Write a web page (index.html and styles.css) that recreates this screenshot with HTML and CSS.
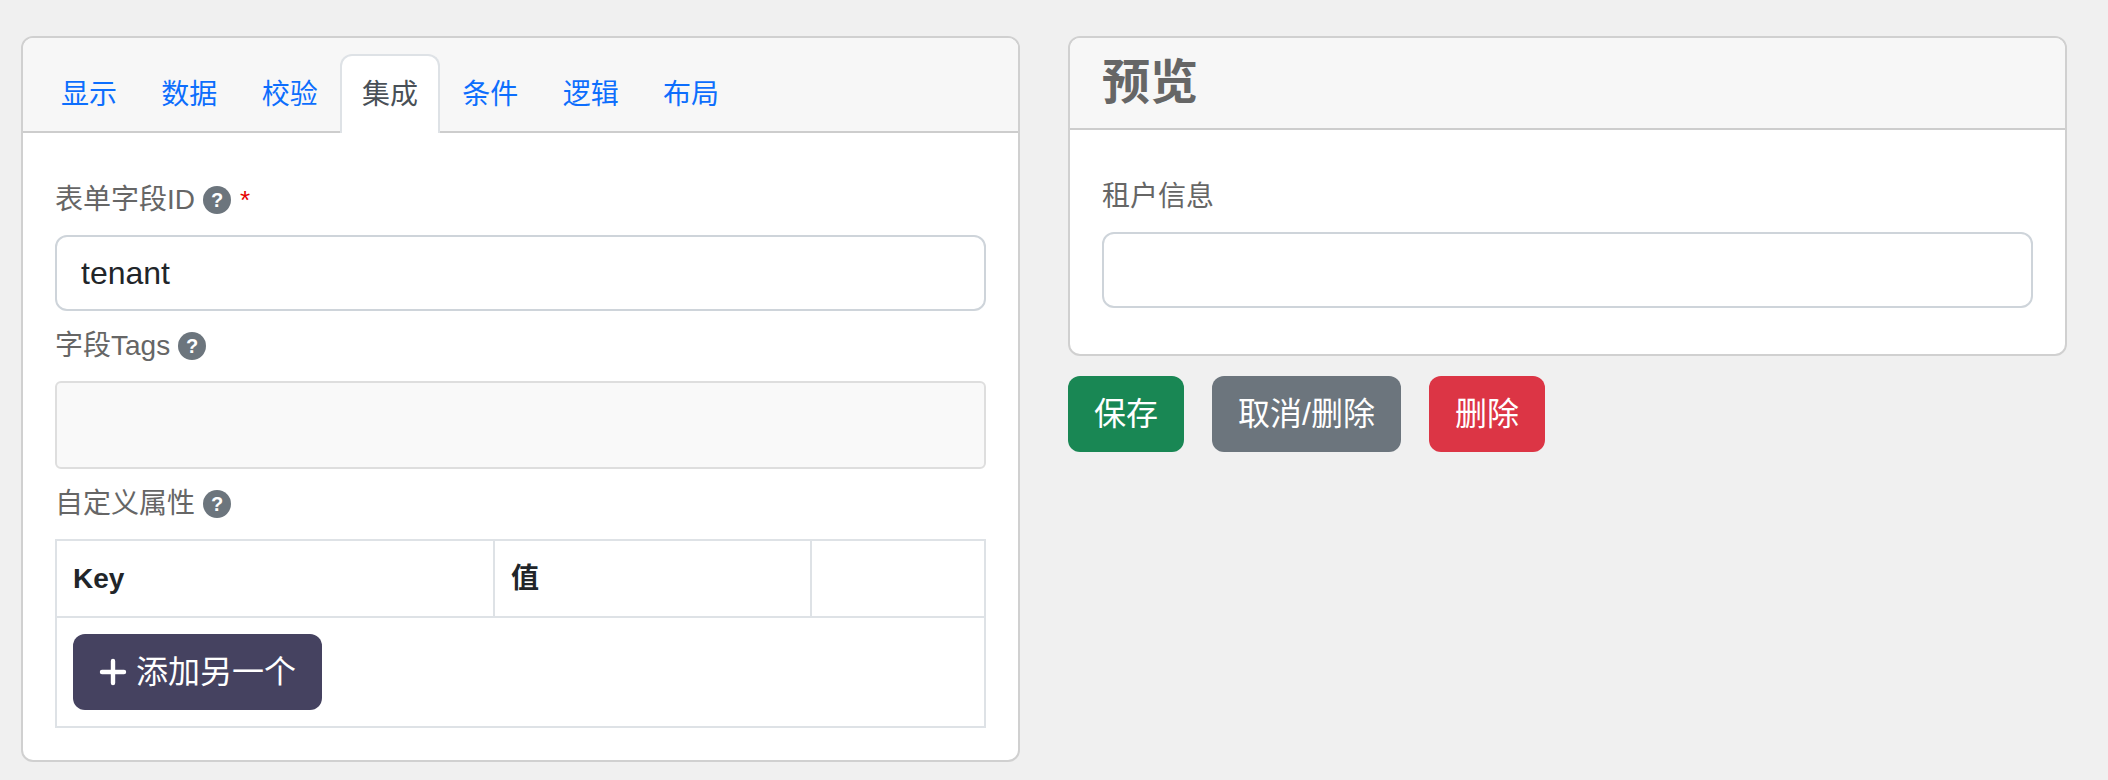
FILE: index.html
```html
<!DOCTYPE html>
<html lang="zh">
<head>
<meta charset="utf-8">
<title>表单字段</title>
<link rel="stylesheet" href="styles.css">
</head>
<body>
<main class="page">
  <section class="card card-edit">
    <nav class="card-header tabs-header">
      <a class="tab">显示</a>
      <a class="tab">数据</a>
      <a class="tab">校验</a>
      <a class="tab active">集成</a>
      <a class="tab">条件</a>
      <a class="tab">逻辑</a>
      <a class="tab">布局</a>
    </nav>
    <div class="card-body">
      <div class="field">
        <label class="label"><span>表单字段ID</span><span class="help">?</span><span class="req">*</span></label>
        <input class="control" type="text" value="tenant">
      </div>
      <div class="field">
        <label class="label"><span>字段Tags</span><span class="help">?</span></label>
        <div class="tags"></div>
      </div>
      <div class="field">
        <label class="label"><span>自定义属性</span><span class="help">?</span></label>
        <table class="grid">
          <thead>
            <tr><th class="col-key">Key</th><th class="col-val">值</th><th></th></tr>
          </thead>
          <tbody>
            <tr>
              <td colspan="3">
                <button class="btn btn-add">
                  <svg class="plus" viewBox="0 0 28 28" aria-hidden="true"><path d="M14 3v22M3 14h22" fill="none" stroke="#fff" stroke-width="4.4" stroke-linecap="round"/></svg>
                  添加另一个
                </button>
              </td>
            </tr>
          </tbody>
        </table>
      </div>
    </div>
  </section>
  <div class="side">
    <section class="card">
      <header class="card-header preview-header"><h3 class="title">预览</h3></header>
      <div class="card-body">
        <div class="field">
          <label class="label"><span>租户信息</span></label>
          <input class="control" type="text">
        </div>
      </div>
    </section>
    <div class="actions">
      <button class="btn btn-save">保存</button>
      <button class="btn btn-cancel">取消/删除</button>
      <button class="btn btn-delete">删除</button>
    </div>
  </div>
</main>
</body>
</html>
```
FILE: styles.css
```css
* { box-sizing: border-box; }
html, body { margin: 0; height: 100%; }
body {
  background: #f0f0f0;
  font-family: "Liberation Sans", "Noto Sans CJK SC", sans-serif;
  font-size: 28px;
  line-height: 42px;
  color: #212529;
  overflow: hidden;
}
.page {
  display: flex;
  align-items: flex-start;
  gap: 48px;
  padding: 36px 41px 0 21px;
}
.card-edit { flex: 0 0 999px; }
.side { flex: 1 1 0; min-width: 0; }
.card {
  background: #fff;
  border: 2px solid #d0d0d0;
  border-radius: 12px;
  overflow: hidden;
}
.card-header {
  background: #f7f7f7;
  border-bottom: 2px solid #cdcdcd;
}
.tabs-header {
  display: flex;
  height: 95px;
  padding: 16px 16px 0 15.8px;
}
.tab {
  flex: 0 0 100.35px;
  height: 79px;
  padding: 18px 0 0;
  text-align: center;
  border: 2px solid transparent;
  border-bottom: 0;
  border-radius: 12px 12px 0 0;
  color: #0d6efd;
}
.tab.active {
  background: #fff;
  border-color: #dee2e6;
  color: #495057;
}
.card-body { padding: 46px 32px 32px; }
.field { margin-bottom: 14px; }
.field:last-child { margin-bottom: 0; }
.card-body .field:only-child { margin-bottom: 14px; }
.label {
  display: flex;
  align-items: center;
  gap: 8px;
  height: 42px;
  margin-bottom: 14px;
  color: #666;
  white-space: nowrap;
}
.help {
  width: 28px;
  height: 28px;
  border-radius: 50%;
  background: #6c757d;
  color: #fff;
  font-size: 20px;
  font-weight: 700;
  line-height: 28px;
  text-align: center;
}
.req { margin-left: 1px; color: #e60000; font-size: 26px; }
.control {
  display: block;
  width: 100%;
  height: 76px;
  padding: 12px 24px;
  background: #fff;
  border: 2px solid #ced4da;
  border-radius: 12px;
  font: inherit;
  font-size: 32px;
  line-height: 48px;
  color: #212529;
  outline: 0;
}
.tags {
  height: 88px;
  background: #f9f9f9;
  border: 2px solid #dedede;
  border-radius: 6px;
}
.grid {
  width: 100%;
  border-collapse: collapse;
  table-layout: fixed;
}
.grid th, .grid td {
  border: 2px solid #dee2e6;
  padding: 16px;
  text-align: left;
}
.grid th { height: 77px; padding: 14px 16px; font-weight: 700; }
.col-key { width: 438px; }
.col-val { width: 317px; }
.btn {
  display: inline-flex;
  align-items: center;
  height: 76px;
  padding: 12px 24px;
  border: 2px solid transparent;
  border-radius: 12px;
  color: #fff;
  font: inherit;
  font-size: 32px;
  line-height: 48px;
  vertical-align: top;
}
.btn-add { background: #454260; gap: 9px; }
.plus { width: 28px; height: 28px; flex: none; }
.title {
  margin: 0;
  font-size: 48px;
  line-height: 90px;
  font-weight: 700;
  color: #666;
}
.preview-header { padding: 0 32px; }
.actions {
  display: flex;
  gap: 28px;
  margin-top: 20px;
}
.btn-save { background: #198754; }
.btn-cancel { background: #6c757d; }
.btn-delete { background: #dc3545; }
```
